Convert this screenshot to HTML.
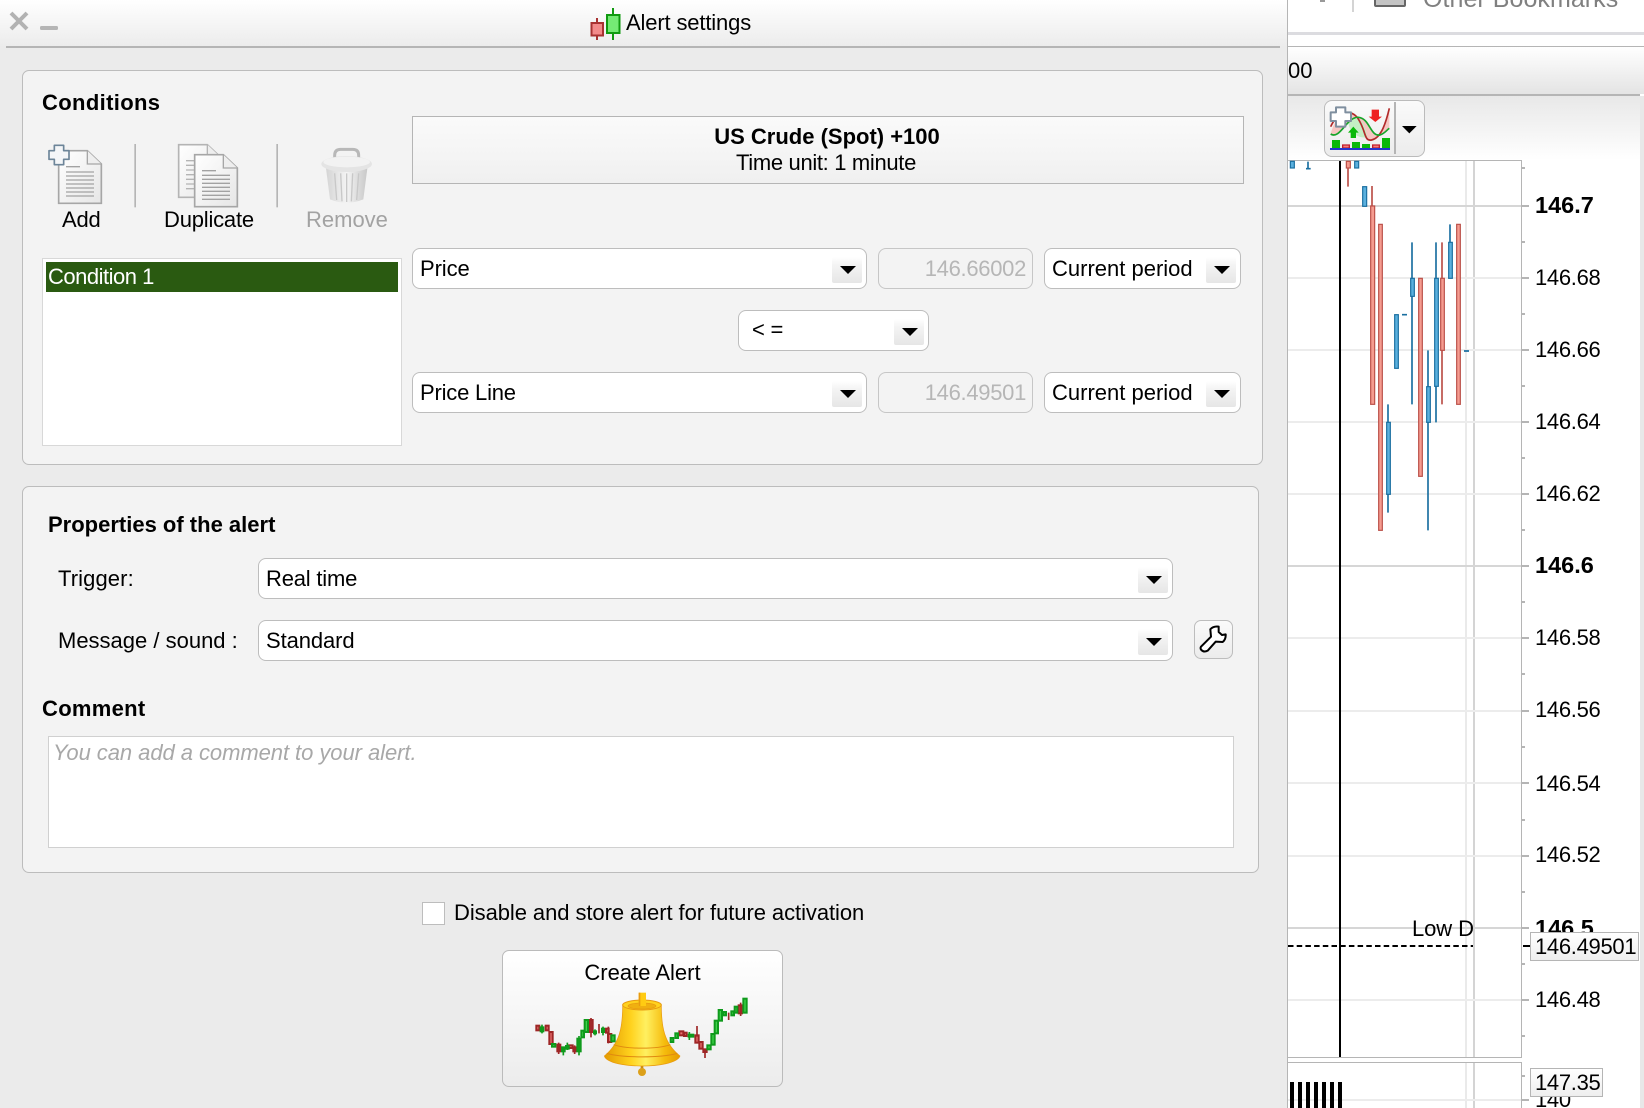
<!DOCTYPE html>
<html><head><meta charset="utf-8"><title>Alert settings</title>
<style>
html,body{margin:0;padding:0;width:1644px;height:1108px;overflow:hidden;background:#fff}
body{position:relative;font-family:"Liberation Sans",Arial,sans-serif;font-size:22px;color:#000}
div,span{position:absolute;box-sizing:border-box}
.t{white-space:nowrap;line-height:26px;height:26px}
.b{font-weight:bold}
.panel{background:#f3f3f3;border:1.5px solid #bcbcbc;border-radius:7px}
.sel{background:#fff;border:1.5px solid #bdbdbd;border-radius:8px;height:41px}
.ab{background:linear-gradient(#fff,#f4f4f4 30%,#e6e6e6);width:30px;height:26px;border-radius:2px}
.ab:after{content:"";position:absolute;left:7.5px;top:8.5px;border-left:8px solid transparent;border-right:8px solid transparent;border-top:8.500px solid #000}
.val{background:#f3f3f3;border:1.5px solid #c6c6c6;border-radius:8px;height:41px}
.tick{background:#b5b5b5;height:2px;left:1521px}
.grid{left:1288px;width:233px;height:2px;background:#ececec}
.lab{left:1535px;letter-spacing:-.3px}
.lb{left:1535px;font-weight:bold;font-size:23.5px}
svg{position:absolute;overflow:visible}
</style></head><body>

<!-- Right background window -->
<div style="left:1288px;top:0;width:356px;height:1108px;background:#fff"></div>
<div class="t" style="left:1423px;top:-16px;font-size:25px;line-height:30px;height:30px;color:#808080;letter-spacing:.05px">Other Bookmarks</div>
<div style="left:1374px;top:-8px;width:32px;height:15px;background:#c4c4c4;border:2px solid #666;border-radius:2px"></div>
<div style="left:1352px;top:0;width:2px;height:12px;background:#d4d4d4"></div>
<div style="left:1320px;top:0;width:5px;height:2px;background:#999"></div>
<div style="left:1288px;top:32px;width:356px;height:3px;background:#dcdce0"></div>
<div style="left:1288px;top:46px;width:356px;height:1px;background:#b5b5b5"></div>
<div style="left:1288px;top:47px;width:356px;height:47px;background:linear-gradient(#fff,#e4e4e4)"></div>
<div class="t" style="left:1288px;top:58px">00</div>
<div style="left:1288px;top:94px;width:352px;height:2px;background:#b5b5b5"></div>
<div style="left:1288px;top:96px;width:352px;height:64px;background:linear-gradient(#e8e8e8,#fff)"></div>
<div style="left:1640px;top:96px;width:4px;height:1012px;background:#e8e8e8"></div>

<!-- Indicator button -->
<div style="left:1324px;top:100px;width:101px;height:57px;border:1.5px solid #bbb;border-radius:8px;background:linear-gradient(#fafafa,#ececec)"></div>
<svg style="left:1270px;top:0" width="374" height="300" viewBox="0 0 1122 900">
<path d="M182 400C200 340 235 325 260 350 290 390 280 425 305 420 330 415 345 380 358 325V385C345 395 335 405 325 405 300 405 295 352 262 352 235 352 210 420 182 405Z" fill="#f6c6c2"/>
<path d="M235 368C250 352 275 350 285 385L292 412C270 415 240 405 235 368Z" fill="#c4eec4"/>
<path d="M182 380C200 340 235 325 260 350 290 390 280 425 305 420 330 415 345 380 358 325" fill="none" stroke="#b22a2a" stroke-width="5"/>
<path d="M182 402C210 420 230 350 265 352 300 355 300 410 330 405 345 400 350 390 358 385" fill="none" stroke="#16a52a" stroke-width="5"/>
<path d="M198 322H226V337H243V363H226V380H198V363H182V337H198Z" fill="#fff" stroke="#7f8f9f" stroke-width="6" stroke-linejoin="round"/>
<path d="M250 380L266 398H258V414H242V398H234Z" fill="#0ab80a"/>
<path d="M305 329H327V350H336L316 366 296 350H305Z" fill="#ee2222"/>
<path d="M186 420H210V444H186ZM246 426H270V444H246ZM276 432H300V444H276ZM336 414H360V444H336Z" fill="#0ab80a"/>
<path d="M218 435H238V444H218ZM308 435H328V444H308Z" fill="#f08080" stroke="#c21c2c" stroke-width="4"/>
<rect x="180" y="444" width="180" height="6" fill="#2434cc"/>
<rect x="372" y="306" width="6" height="156" fill="#b5b5b5"/>
<path d="M396 378H440L418 400Z" fill="#000"/>
</svg>

<!-- Chart -->
<div style="left:1287px;top:160px;width:235px;height:898px;background:#fff;border:1.5px solid #b5b5b5"></div>
<div style="left:1465px;top:161px;width:2px;height:896px;background:#eaeaea"></div>
<div style="left:1473px;top:161px;width:2px;height:896px;background:#d4d4d4"></div>

<div class="grid" style="top:205px;background:#d6d6d6"></div>
<div class="grid" style="top:277px"></div>
<div class="grid" style="top:349px"></div>
<div class="grid" style="top:421px"></div>
<div class="grid" style="top:493px"></div>
<div class="grid" style="top:565px;background:#d6d6d6"></div>
<div class="grid" style="top:637px"></div>
<div class="grid" style="top:710px"></div>
<div class="grid" style="top:782px"></div>
<div class="grid" style="top:855px"></div>
<div class="grid" style="top:927px;background:#d6d6d6"></div>
<div class="grid" style="top:999px"></div>

<div class="tick" style="top:167px;width:4px"></div>
<div class="tick" style="top:205px;width:8px"></div>
<div class="tick" style="top:241px;width:4px"></div>
<div class="tick" style="top:277px;width:8px"></div>
<div class="tick" style="top:313px;width:4px"></div>
<div class="tick" style="top:349px;width:8px"></div>
<div class="tick" style="top:385px;width:4px"></div>
<div class="tick" style="top:421px;width:8px"></div>
<div class="tick" style="top:457px;width:4px"></div>
<div class="tick" style="top:493px;width:8px"></div>
<div class="tick" style="top:529px;width:4px"></div>
<div class="tick" style="top:565px;width:8px"></div>
<div class="tick" style="top:601px;width:4px"></div>
<div class="tick" style="top:637px;width:8px"></div>
<div class="tick" style="top:673px;width:4px"></div>
<div class="tick" style="top:710px;width:8px"></div>
<div class="tick" style="top:746px;width:4px"></div>
<div class="tick" style="top:782px;width:8px"></div>
<div class="tick" style="top:819px;width:4px"></div>
<div class="tick" style="top:855px;width:8px"></div>
<div class="tick" style="top:891px;width:4px"></div>
<div class="tick" style="top:927px;width:8px"></div>
<div class="tick" style="top:963px;width:4px"></div>
<div class="tick" style="top:999px;width:8px"></div>
<div class="tick" style="top:1035px;width:4px"></div>

<!-- candles (coords are 3x) -->
<svg style="left:1270px;top:180px" width="374" height="400" viewBox="0 0 1122 1200">
<g fill="none" stroke="#1a6fa0" stroke-width="5">
<path d="M114 -55V-36M108 -34H122M354 673V998M426 187V673M474 511V1051M498 187V727M540 133V187M396 404H411M582 513H597"/>
</g>
<g fill="none" stroke="#bb4f48" stroke-width="5">
<path d="M234 -36V20M306 18V78M516 187V673"/>
</g>
<g fill="#5bb0de" stroke="#1a6fa0" stroke-width="3.5">
<rect x="61" y="-56" width="12" height="20"/>
<rect x="254" y="-56" width="12" height="20"/>
<rect x="278" y="20" width="12" height="59"/>
<rect x="350" y="727" width="11" height="216"/>
<rect x="374" y="404" width="11" height="161"/>
<rect x="422" y="295" width="11" height="54"/>
<rect x="470" y="620" width="11" height="107"/>
<rect x="494" y="295" width="11" height="324"/>
<rect x="536" y="187" width="11" height="108"/>
</g>
<g fill="#f59c90" stroke="#bb4f48" stroke-width="3.5">
<rect x="229" y="-56" width="12" height="20"/>
<rect x="302" y="78" width="12" height="595"/>
<rect x="326" y="133" width="11" height="918"/>
<rect x="446" y="295" width="11" height="594"/>
<rect x="512" y="295" width="11" height="216"/>
<rect x="560" y="133" width="11" height="540"/>
</g>
</svg>
<div style="left:1339px;top:161px;width:2px;height:896px;background:#000"></div>

<div class="t lb" style="top:192px">146.7</div>
<div class="t lab" style="top:265px">146.68</div>
<div class="t lab" style="top:337px">146.66</div>
<div class="t lab" style="top:409px">146.64</div>
<div class="t lab" style="top:481px">146.62</div>
<div class="t lb" style="top:552px">146.6</div>
<div class="t lab" style="top:625px">146.58</div>
<div class="t lab" style="top:697px">146.56</div>
<div class="t lab" style="top:771px">146.54</div>
<div class="t lab" style="top:842px">146.52</div>
<div class="t lb" style="top:915px">146.5</div>
<div class="t lab" style="top:987px">146.48</div>
<div class="t" style="left:1412px;top:916px;letter-spacing:-.1px">Low D</div>
<svg style="left:1288px;top:944px" width="243" height="4"><line x1="0" y1="2" x2="185" y2="2" stroke="#000" stroke-width="2" stroke-dasharray="5.5 3.2"/><line x1="235" y1="2" x2="243" y2="2" stroke="#000" stroke-width="2"/></svg>
<div style="left:1530px;top:932px;width:109px;height:29px;background:linear-gradient(#fff,#eee);border:1.5px solid #b5b5b5"></div>
<div class="t" style="left:1535px;top:934px;letter-spacing:-.3px">146.49501</div>

<!-- lower pane -->
<div style="left:1287px;top:1062px;width:235px;height:60px;background:#fff;border:1.5px solid #b5b5b5"></div>
<div style="left:1465px;top:1063px;width:2px;height:45px;background:#eaeaea"></div>
<div style="left:1473px;top:1063px;width:2px;height:45px;background:#d4d4d4"></div>
<div class="grid" style="top:1099px"></div>
<div class="tick" style="top:1075px;width:4px"></div>
<div class="tick" style="top:1099px;width:8px"></div>
<div style="left:1290px;top:1082px;width:4px;height:26px;background:#000"></div>
<div style="left:1298px;top:1082px;width:4px;height:26px;background:#000"></div>
<div style="left:1306px;top:1082px;width:4px;height:26px;background:#000"></div>
<div style="left:1314px;top:1082px;width:4px;height:26px;background:#000"></div>
<div style="left:1322px;top:1082px;width:4px;height:26px;background:#000"></div>
<div style="left:1330px;top:1082px;width:4px;height:26px;background:#000"></div>
<div style="left:1338px;top:1082px;width:4px;height:26px;background:#000"></div>
<div class="t lab" style="top:1087px">140</div>
<div style="left:1530px;top:1068px;width:73px;height:29px;background:linear-gradient(#fff,#eee);border:1.5px solid #b5b5b5"></div>
<div class="t" style="left:1535px;top:1070px;letter-spacing:-.3px">147.35</div>

<!-- Dialog -->
<div style="left:0;top:0;width:1288px;height:1108px;background:#ebebeb;border-right:1.5px solid #b5b5b5"></div>
<div style="left:0;top:0;width:1287px;height:46px;background:linear-gradient(#fff,#ececec)"></div>
<div style="left:6px;top:46px;width:1274px;height:2px;background:#b5b5b5"></div>
<svg style="left:0;top:0" width="70" height="40"><path d="M11 13L27 29M27 13L11 29" stroke="#b2b2b2" stroke-width="4"/><rect x="40" y="26" width="18" height="4" rx="1.5" fill="#b5b5b5"/></svg>
<svg style="left:585px;top:5px" width="40" height="38">
<path d="M12 13V35" stroke="#a83232" stroke-width="2"/>
<rect x="6.500" y="18" width="11.500" height="12.500" fill="#f28a8a" stroke="#a83232" stroke-width="2"/>
<path d="M28 3V35" stroke="#109a10" stroke-width="2"/>
<rect x="22" y="10" width="12.500" height="18" fill="#74ea74" stroke="#109a10" stroke-width="2"/>
</svg>
<div class="t" style="left:626px;top:10px;letter-spacing:-.15px">Alert settings</div>

<!-- Conditions panel -->
<div class="panel" style="left:22px;top:70px;width:1241px;height:395px"></div>
<div class="t b" style="left:42px;top:90px;letter-spacing:.35px">Conditions</div>

<svg style="left:0;top:0" width="420" height="300" viewBox="0 0 1260 900">
<defs>
<linearGradient id="dg" x1="0" y1="0" x2="1" y2="1"><stop offset="0" stop-color="#fff"/><stop offset="1" stop-color="#e6e6e6"/></linearGradient>
<linearGradient id="tg" x1="0" y1="0" x2="1" y2="0"><stop offset="0" stop-color="#d4d4d4"/><stop offset=".5" stop-color="#f4f4f4"/><stop offset="1" stop-color="#c8c8c8"/></linearGradient>
</defs>
<path d="M176 452H262L304 492V610H176Z" fill="url(#dg)" stroke="#a6a6a6" stroke-width="5"/>
<path d="M262 452V492H304" fill="#eee" stroke="#a6a6a6" stroke-width="4"/>
<path d="M198 500H240M198 516H282M198 528H282M198 540H282M198 552H282M198 564H282M198 576H282M198 588H282" stroke="#a2a2a2" stroke-width="4"/>
<path d="M163 436H191V452H207V478H191V494H163V478H147V452H163Z" fill="#f4f6f8" stroke="#6d8599" stroke-width="5" stroke-linejoin="round"/>
<path d="M536 434H622L660 470V592H536Z" fill="url(#dg)" stroke="#b4b4b4" stroke-width="5"/>
<path d="M622 434V470H660" fill="#eee" stroke="#b4b4b4" stroke-width="4"/>
<path d="M558 482H584M558 496H584M558 510H584M558 524H584M558 538H584M558 552H584M558 566H584" stroke="#b4b4b4" stroke-width="4"/>
<path d="M584 464H670L712 504V620H584Z" fill="url(#dg)" stroke="#a6a6a6" stroke-width="5"/>
<path d="M670 464V504H712" fill="#eee" stroke="#a6a6a6" stroke-width="4"/>
<path d="M606 512H648M606 526H690M606 538H690M606 550H690M606 562H690M606 574H690M606 586H690M606 598H690" stroke="#a2a2a2" stroke-width="4"/>
<rect x="403" y="432" width="5" height="190" fill="#b5b5b5"/>
<rect x="829" y="432" width="5" height="190" fill="#b5b5b5"/>
<path d="M1004 490V466Q1004 448 1022 448H1058Q1076 448 1076 466V490" fill="none" stroke="#b8b8b8" stroke-width="9"/>
<path d="M978 505L990 598Q1040 618 1090 598L1102 505Z" fill="url(#tg)"/>
<path d="M1004 520L1010 600M1022 520L1026 604M1040 520V606M1058 520L1054 604M1076 520L1070 600" stroke="#c8c8c8" stroke-width="4" fill="none"/>
<ellipse cx="1040" cy="492" rx="76" ry="24" fill="#e4e4e4"/>
<ellipse cx="1040" cy="486" rx="70" ry="16" fill="#f2f2f2"/>
</svg>
<div class="t" style="left:62px;top:207px;letter-spacing:-.2px">Add</div>
<div class="t" style="left:164px;top:207px;letter-spacing:-.2px">Duplicate</div>
<div class="t" style="left:306px;top:207px;color:#a2a2a2">Remove</div>

<div style="left:42px;top:258px;width:360px;height:188px;background:#fff;border:1.5px solid #d8d8d8"></div>
<div style="left:46px;top:262px;width:352px;height:30px;background:#2a5a11"></div>
<div class="t" style="left:48px;top:264px;color:#fff;letter-spacing:-.5px">Condition 1</div>

<div style="left:412px;top:116px;width:832px;height:68px;background:linear-gradient(#fafafa,#f0f0f0);border:1.5px solid #b5b5b5"></div>
<div class="t b" style="left:411px;width:832px;text-align:center;top:124px">US Crude (Spot) +100</div>
<div class="t" style="left:410px;width:832px;text-align:center;top:150px;letter-spacing:-.33px">Time unit: 1 minute</div>

<div class="sel" style="left:412px;top:248px;width:455px"></div>
<div class="t" style="left:420px;top:256px;letter-spacing:-.1px">Price</div>
<div class="ab" style="left:832px;top:257px"></div>
<div class="val" style="left:878px;top:248px;width:155px"></div>
<div class="t" style="left:878px;width:148px;text-align:right;top:256px;color:#b6b6b6;letter-spacing:-.3px">146.66002</div>
<div class="sel" style="left:1044px;top:248px;width:197px"></div>
<div class="t" style="left:1052px;top:256px">Current period</div>
<div class="ab" style="left:1206px;top:257px"></div>

<div class="sel" style="left:738px;top:310px;width:191px"></div>
<div class="t" style="left:752px;top:317px;letter-spacing:-.2px">&lt; =</div>
<div class="ab" style="left:894px;top:319px"></div>

<div class="sel" style="left:412px;top:372px;width:455px"></div>
<div class="t" style="left:420px;top:380px;letter-spacing:-.2px">Price Line</div>
<div class="ab" style="left:832px;top:381px"></div>
<div class="val" style="left:878px;top:372px;width:155px"></div>
<div class="t" style="left:878px;width:148px;text-align:right;top:380px;color:#b6b6b6;letter-spacing:-.3px">146.49501</div>
<div class="sel" style="left:1044px;top:372px;width:197px"></div>
<div class="t" style="left:1052px;top:380px">Current period</div>
<div class="ab" style="left:1206px;top:381px"></div>

<!-- Properties panel -->
<div class="panel" style="left:22px;top:486px;width:1237px;height:387px"></div>
<div class="t b" style="left:48px;top:512px">Properties of the alert</div>
<div class="t" style="left:58px;top:566px;letter-spacing:.1px">Trigger:</div>
<div class="t" style="left:58px;top:628px">Message / sound :</div>
<div class="sel" style="left:258px;top:558px;width:915px"></div>
<div class="t" style="left:266px;top:566px;letter-spacing:-.2px">Real time</div>
<div class="ab" style="left:1138px;top:567px"></div>
<div class="sel" style="left:258px;top:620px;width:915px"></div>
<div class="t" style="left:266px;top:628px;letter-spacing:-.1px">Standard</div>
<div class="ab" style="left:1138px;top:629px"></div>
<div style="left:1194px;top:620px;width:39px;height:39px;border:1.5px solid #bdbdbd;border-radius:7px;background:linear-gradient(#fafafa,#ececec)"></div>
<svg style="left:1100px;top:540px" width="200" height="140" viewBox="0 0 600 420">
<path d="M303 320L333 290 331 268Q340 258 356 260V276L366 285 377 283Q378 298 368 306L347 305 323 332Q312 338 304 330 300 325 303 320Z" fill="#fff" stroke="#000" stroke-width="6" stroke-linejoin="round"/>
</svg>
<div class="t b" style="left:42px;top:696px;letter-spacing:.3px">Comment</div>
<div style="left:48px;top:736px;width:1186px;height:112px;background:#fff;border:1.5px solid #d0d0d0"></div>
<div class="t" style="left:53px;top:740px;font-style:italic;color:#a8a8a8;letter-spacing:-.06px">You can add a comment to your alert.</div>

<div style="left:422px;top:902px;width:23px;height:23px;background:#fff;border:1.5px solid #bdbdbd"></div>
<div class="t" style="left:454px;top:900px;letter-spacing:-.07px">Disable and store alert for future activation</div>

<!-- Create Alert -->
<div style="left:502px;top:950px;width:281px;height:137px;border:1.5px solid #bbb;border-radius:7px;background:linear-gradient(#fff,#ececec)"></div>
<div class="t" style="left:502px;width:281px;text-align:center;top:960px">Create Alert</div>
<svg style="left:480px;top:930px" width="320" height="178" viewBox="0 0 960 534">
<defs>
<linearGradient id="bell" x1="0" y1="0" x2="1" y2="0"><stop offset="0" stop-color="#e39a00"/><stop offset=".35" stop-color="#ffd21e"/><stop offset=".55" stop-color="#fff060"/><stop offset=".8" stop-color="#f5bb0c"/><stop offset="1" stop-color="#e69a00"/></linearGradient>
</defs>
<g fill="#e8706e" stroke="#9e2626" stroke-width="6">
<rect x="169" y="287" width="9" height="14"/><rect x="197" y="287" width="9" height="14"/><rect x="208" y="306" width="10" height="36"/><rect x="232" y="344" width="9" height="20"/><rect x="266" y="346" width="12" height="8"/><rect x="280" y="352" width="8" height="12"/><rect x="328" y="270" width="10" height="36"/><rect x="378" y="296" width="8" height="12"/><rect x="384" y="312" width="10" height="24"/><rect x="598" y="304" width="12" height="12"/><rect x="612" y="308" width="8" height="10"/><rect x="646" y="316" width="10" height="22"/><rect x="658" y="336" width="10" height="20"/><rect x="670" y="358" width="10" height="8"/><rect x="776" y="226" width="10" height="24"/>
</g>
<g fill="#3ed44a" stroke="#0f9a1c" stroke-width="6">
<rect x="182" y="292" width="8" height="12"/><rect x="216" y="342" width="10" height="8"/><rect x="246" y="352" width="8" height="12"/><rect x="258" y="348" width="8" height="8"/><rect x="292" y="326" width="10" height="38"/><rect x="304" y="302" width="8" height="20"/><rect x="314" y="270" width="10" height="36"/><rect x="342" y="304" width="6" height="6"/><rect x="366" y="296" width="6" height="10"/><rect x="394" y="316" width="10" height="18"/><rect x="572" y="324" width="8" height="12"/><rect x="586" y="310" width="8" height="14"/><rect x="626" y="314" width="14" height="6"/><rect x="682" y="346" width="10" height="12"/><rect x="694" y="312" width="10" height="32"/><rect x="704" y="272" width="10" height="38"/><rect x="716" y="240" width="10" height="32"/><rect x="730" y="246" width="8" height="10"/><rect x="754" y="244" width="8" height="12"/><rect x="764" y="230" width="8" height="18"/><rect x="790" y="206" width="10" height="42"/>
</g>
<path d="M186 284V310M250 350V376M262 338V360M297 318V376M345 298V316M369 290V316M628 306V330" stroke="#0f9a1c" stroke-width="5"/>
<path d="M236 338V372M284 346V372M333 264V322M357 282V310M385 290V340M651 288V320M675 356V384M746 248V270M782 218V258" stroke="#9e2626" stroke-width="5"/>
<rect x="482" y="404" width="8" height="14" fill="#c98a10"/>
<circle cx="486" cy="426" r="12" fill="#dca01a"/>
<path d="M428 225C428 290 420 340 373 378 380 400 440 408 486 408 532 408 592 400 600 378 552 340 544 290 544 225Z" fill="url(#bell)" stroke="#e89a10" stroke-width="2"/>
<path d="M401 344C440 358 532 358 571 344M380 370C430 384 542 384 592 370" fill="none" stroke="#e08a10" stroke-width="3"/>
<ellipse cx="486" cy="225" rx="58" ry="15" fill="#ffd21e" stroke="#e89a10" stroke-width="3"/>
<ellipse cx="486" cy="228" rx="42" ry="9" fill="#f0b010" stroke="#e89a10" stroke-width="2"/>
<rect x="476" y="188" width="22" height="40" fill="#ffcb12"/>
<rect x="476" y="188" width="5" height="40" fill="#e89a10"/>
</svg>
</body></html>
